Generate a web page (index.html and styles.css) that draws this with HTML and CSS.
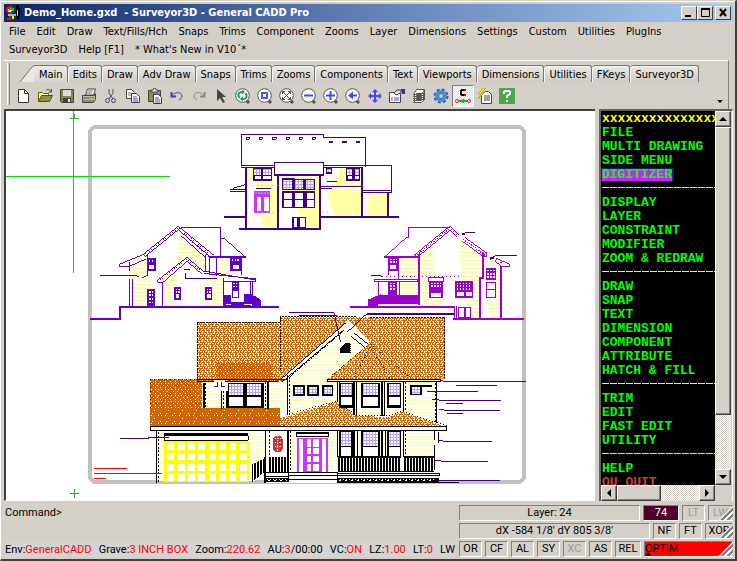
FILE: index.html
```
<!DOCTYPE html>
<html lang="en">
<head>
<meta charset="utf-8">
<title>Demo_Home.gxd - Surveyor3D - General CADD Pro</title>
<link rel="stylesheet" href="styles.css">
</head>
<body>
<div class="window">
  <header class="titlebar">
    <svg class="app-icon" viewBox="0 0 16 16" shape-rendering="crispEdges">
      <circle cx="4" cy="5" r="3" fill="#fff" stroke="#f00" stroke-width="2"/>
      <path d="M4 8v7M1 14h4" stroke="#f00" stroke-width="2"/>
      <path d="M2 10h12" stroke="#0ff" stroke-width="2"/>
      <path d="M6 11h2v3h-2z" fill="#ff0"/>
      <path d="M10 0h3v3h1v8l-2 4-2-4z" fill="#000"/><path d="M11 5v6" stroke="#ccc"/>
      <path d="M7 3v3M3 4h3" stroke="#0c0" stroke-width="2"/>
    </svg>
    <h1>Demo_Home.gxd&nbsp; - Surveyor3D - General CADD Pro</h1>
    <div class="window-buttons">
      <button aria-label="Minimize"><svg viewBox="0 0 12 10"><path d="M2 8h6" stroke="#000" stroke-width="2"/></svg></button>
      <button aria-label="Maximize"><svg viewBox="0 0 12 10"><path d="M2.500 0v8.500h8V0" fill="none" stroke="#000"/><path d="M2 1h9" stroke="#000" stroke-width="2"/></svg></button>
      <button class="close" aria-label="Close"><svg viewBox="0 0 12 10"><path d="M3 1l6 7M9 1l-6 7" stroke="#000" stroke-width="2"/></svg></button>
    </div>
  </header>

  <nav class="menubar">
    <a href="#">File</a><a href="#">Edit</a><a href="#">Draw</a><a href="#">Text/Fills/Hch</a><a href="#">Snaps</a><a href="#">Trims</a><a href="#">Component</a><a href="#">Zooms</a><a href="#">Layer</a><a href="#">Dimensions</a><a href="#">Settings</a><a href="#">Custom</a><a href="#">Utilities</a><a href="#">PlugIns</a><a href="#">Surveyor3D</a><a href="#">Help [F1]</a><a href="#">* What's New in V10´*</a>
  </nav>

  <section class="ribbon">
    <div class="grip"></div>
    <div class="ribbon-body">
      <div class="tabs" role="tablist">
        <svg class="tab-slant" viewBox="0 0 14 17"><path d="M0 17L12 2L14 1V17z" fill="#e9e7e2"/><path d="M0 17L12 2L14 .5" fill="none" stroke="#777"/></svg>
        <button role="tab" class="active" aria-selected="true">Main</button><button role="tab">Edits</button><button role="tab">Draw</button><button role="tab">Adv Draw</button><button role="tab">Snaps</button><button role="tab">Trims</button><button role="tab">Zooms</button><button role="tab">Components</button><button role="tab">Text</button><button role="tab">Viewports</button><button role="tab">Dimensions</button><button role="tab">Utilities</button><button role="tab">FKeys</button><button role="tab">Surveyor3D</button>
      </div>
      <div class="tools">
        <svg class="defs" width="0" height="0"><defs>
          <symbol id="lens" viewBox="0 0 16 16"><path d="M11 12l3 3" stroke="#555" stroke-width="3"/><circle cx="7.500" cy="7.500" r="6.800" fill="#fff" stroke="#555"/></symbol>
        </defs></svg>
        <button aria-label="New"><svg viewBox="0 0 16 16"><path d="M3.500 1.500h6l4 4v9h-10z" fill="#fff" stroke="#333"/><path d="M9.500 1.500v4h4" fill="none" stroke="#333"/></svg></button>
        <button aria-label="Open"><svg viewBox="0 0 16 16"><path d="M1.500 13.500v-9h4l1 1h5v2" fill="#ffffb0" stroke="#660"/><path d="M1.500 13.500l3-6h11l-3 6z" fill="#939347" stroke="#550"/><path d="M9 2.500c2-2 4-1 5 1M14.500 1v3h-3" fill="none" stroke="#444"/></svg></button>
        <button aria-label="Save"><svg viewBox="0 0 16 16"><path d="M1.500 1.500h13v13h-12l-1-1z" fill="#85854c" stroke="#444"/><path d="M4 2h8v6H4z" fill="#ddd"/><path d="M4 10h8v5H4z" fill="#444"/><path d="M9 11h2v3H9z" fill="#eee"/></svg></button>
        <button aria-label="Print"><svg viewBox="0 0 16 16"><path d="M4.500 7l2-6h8l-2 6z" fill="#fff" stroke="#444"/><path d="M7 3h5M6 5h5" stroke="#777"/><path d="M1.500 7.500h11l2-2v6l-2 3h-11z" fill="#bbb" stroke="#444"/><path d="M1 10h12M1 13h12M13 8l2-2" stroke="#555"/><path d="M9 11h3" stroke="#cc0" stroke-width="2"/></svg></button>
        <button aria-label="Cut"><svg viewBox="0 0 16 16" fill="none"><path d="M6 1v4l4 6M10 1v4l-4 6" stroke="#555"/><circle cx="4.500" cy="12.500" r="2" stroke="#3a3aa0"/><circle cx="10.500" cy="12.500" r="2" stroke="#3a3aa0"/></svg></button>
        <button aria-label="Copy"><svg viewBox="0 0 16 16"><path d="M1.500 1.500h5l3 3v6h-8z" fill="#fff" stroke="#444"/><path d="M3 5h4M3 7h4" stroke="#777"/><path d="M6.500 5.500h5l3 3v6h-8z" fill="#fff" stroke="#338"/><path d="M8 9h4M8 11h5M8 13h5" stroke="#557"/></svg></button>
        <button aria-label="Paste"><svg viewBox="0 0 16 16"><path d="M1.500 2.500h12v11h-12z" fill="#8c8c50" stroke="#444"/><path d="M4 4V2h2l1-2h1l1 2h2v2z" fill="#eed" stroke="#444"/><path d="M6.500 6.500h5l3 3v6h-8z" fill="#fff" stroke="#338"/><path d="M8 10h4M8 12h5M8 14h5" stroke="#557"/></svg></button>
        <button aria-label="Undo"><svg viewBox="0 0 16 16" fill="none" stroke="#4444a8"><path d="M3 8c3-5 10-4 10 0 0 2-1 3-3 4"/><path d="M2.500 4v4.500h4.500" stroke-width="2"/></svg></button>
        <button aria-label="Redo"><svg viewBox="0 0 16 16" fill="none" stroke="#888"><path d="M13 8C10 3 3 4 3 8c0 2 1 3 3 4"/><path d="M13.500 4v4.500h-4.500" stroke-width="2"/></svg></button>
        <button aria-label="Select"><svg viewBox="0 0 16 16"><path d="M4 1v12l3-3 3 5 2-1-3-5h4z" fill="#444"/></svg></button>
        <button aria-label="Regenerate"><svg viewBox="0 0 16 16"><use href="#lens"/><path d="M4.500 10C2 6 4 4 7 4M10.500 5c2.500 4 .5 6-2.500 6" fill="none" stroke="#295" stroke-width="2"/><path d="M7 1.500l3 2.500-3 2.500zM8 8.500l-3 2.500 3 2.500z" fill="#295"/></svg></button>
        <button aria-label="Zoom window"><svg viewBox="0 0 16 16"><use href="#lens"/><path d="M5 5h5v5H5z" fill="#fff" stroke="#55f" stroke-width="2"/></svg></button>
        <button aria-label="Zoom all"><svg viewBox="0 0 16 16"><use href="#lens"/><path d="M4 4l7 7M11 4l-7 7" stroke="#446"/><path d="M3.500 6V3.500H6M9 3.500h2.500V6M11.500 9v2.500H9M6 11.500H3.500V9" fill="none" stroke="#446"/></svg></button>
        <button aria-label="Zoom out"><svg viewBox="0 0 16 16"><use href="#lens"/><path d="M3 7.500h9" stroke="#44f" stroke-width="2"/></svg></button>
        <button aria-label="Zoom in"><svg viewBox="0 0 16 16"><use href="#lens"/><path d="M3 7.500h9M7.500 3v9" stroke="#44f" stroke-width="2"/></svg></button>
        <button aria-label="Zoom previous"><svg viewBox="0 0 16 16"><use href="#lens"/><path d="M3 7.500l5-4v3h4v2H8v3z" fill="#44f"/></svg></button>
        <button aria-label="Pan"><svg viewBox="0 0 16 16"><path d="M8 1l3 3H9v3h3V5l3 3-3 3V9H9v3h2l-3 3-3-3h2V9H4v2L1 8l3-3v2h3V4H5z" fill="#44f"/></svg></button>
        <button aria-label="Properties"><svg viewBox="0 0 16 16"><path d="M.5 4.500h11v10H.5z" fill="#fff" stroke="#444"/><path d="M5 5l3-3h4v3l-5 2z" fill="#ddd" stroke="#444"/><path d="M12 1h4v5h-3z" fill="#339"/><path d="M2 10h2M2 12h2" stroke="#d33"/><path d="M5 10h5M5 12h5" stroke="#44d"/></svg></button>
        <button aria-label="Layers"><svg viewBox="0 0 16 16" fill="#fff" stroke="#555"><path d="M2.500 14.500l3-3h8l-3 3zM2.500 12.500l3-3h8l-3 3zM2.500 10.500l3-3h8l-3 3zM2.500 8.500l3-3h8l-3 3zM2.500 6.500l3-5h8l-3 5z"/><path d="M13.500 2v10"/></svg></button>
        <button aria-label="Settings"><svg viewBox="0 0 16 16"><circle cx="8" cy="8" r="6" fill="none" stroke="#44f" stroke-width="3" stroke-dasharray="2.700 2"/><circle cx="8" cy="8" r="4.500" fill="#d4d0c8" stroke="#399cb4" stroke-width="3"/><circle cx="8" cy="8" r="2.500" fill="none" stroke="#44f"/></svg></button>
        <button class="pressed" aria-label="Object snap"><svg viewBox="0 0 16 16"><path d="M10 2H7L6 3v3l1 1h3" fill="none" stroke="#000" stroke-width="2"/><path d="M9 2h2M9 7h2" stroke="#d00" stroke-width="2"/><path d="M1 13h14" stroke="#000"/><g fill="#fff" stroke="#c22"><circle cx="2" cy="13" r="1.500"/><circle cx="14" cy="13" r="1.500"/></g><circle cx="8" cy="13" r="2" fill="#0c0"/></svg></button>
        <button aria-label="Quick list"><svg viewBox="0 0 16 16"><path d="M4.500 6.500l4-3h3l3 3v9h-10z" fill="#fff" stroke="#444"/><path d="M7 8h6M7 10h6M7 12h6" stroke="#444"/><path d="M6 0L1 6h3l-3 5 6-6H4l5-5z" fill="#ee0" stroke="#998800" stroke-width=".5"/></svg></button>
        <button aria-label="Help"><svg viewBox="0 0 16 16"><path d="M0 0h16v16H0z" fill="#4aa84a"/><path d="M5 6V4l1-1h4l1 1v2L8 8v2M8 12v2" fill="none" stroke="#fff" stroke-width="2"/></svg></button>
        <button class="more" aria-label="More tools"><svg viewBox="0 0 6 4"><path d="M0 0h6L3 3z"/></svg></button>
      </div>
    </div>
  </section>

  <main class="workspace">
    <div class="canvas">
      <svg class="drawing" width="588" height="390" viewBox="6 111 588 390" shape-rendering="crispEdges" fill="none">
        <defs>
          <pattern id="lap" width="12" height="12" patternUnits="userSpaceOnUse"><path d="M0 0h12v9H0z" fill="#ffffa6"/></pattern>
          <pattern id="siding" width="9" height="9" patternUnits="userSpaceOnUse"><path d="M0 0h9v9H0z" fill="#fff"/><path d="M0 0h9v4H0z" fill="#ffffa6"/></pattern>
          <pattern id="shingle" width="36" height="24" patternUnits="userSpaceOnUse"><path d="M0 0h36v24H0z" fill="#cc6600"/><path d="M0 4.500h6M9 4.500h3M15 4.500h6M24 4.500h9M3 10.500h6M12 10.500h6M21 10.500h3M27 10.500h6M0 16.500h3M6 16.500h6M15 16.500h9M27 16.500h6M3 22.500h6M12 22.500h6M21 22.500h6M30 22.500h6M9 7.500h3M24 7.500h3M3 13.500h3M15 13.500h3M30 13.500h3M18 1.500h3M33 1.500h3M6 19.500h3M21 19.500h3" stroke="#fff" stroke-width="3"/></pattern>
          <pattern id="dense" width="30" height="18" patternUnits="userSpaceOnUse"><path d="M0 0h30v18H0z" fill="#cc6600"/><path d="M3 4.500h3M15 4.500h3M24 4.500h3M9 10.500h3M21 10.500h3M0 16.500h3M15 16.500h3" stroke="#fff" stroke-width="3"/></pattern>
          <pattern id="sparse" width="42" height="24" patternUnits="userSpaceOnUse"><path d="M0 0h42v24H0z" fill="#cc6600"/><path d="M3 4.500h3M24 4.500h3M33 4.500h3M12 13.500h3M6 22.500h3M30 22.500h3" stroke="#fff" stroke-width="3"/></pattern>
          <pattern id="rails" width="9" height="60" patternUnits="userSpaceOnUse"><path d="M0 0h6v60H0z" fill="#000"/></pattern>
          <pattern id="pane" width="9" height="9" patternUnits="userSpaceOnUse"><path d="M0 0h9v9H0z" fill="#fff"/><path d="M4.500 0v9M0 4.500h9" stroke="#b8a0ff" stroke-width="4"/></pattern>
        </defs>

        <rect x="90" y="127" width="434" height="355" rx="6" stroke="#c0c0c0" stroke-width="4"/>
        <path d="M6 176.500h164M73.500 111v162" stroke="#00e000"/>
        <path d="M70 118.500h9M74.500 114v5M70 493.500h9M74.500 489v9" stroke="#30b030"/>

        <!-- Rear elevation -->
        <g transform="translate(210 120) scale(.333333)" stroke="#400080" stroke-width="3">
          <g fill="url(#lap)" stroke="none"><path d="M111 143h81v64h-52l-8-28h-21zM180 210h22v115h-39l-15-46h32zM207 170h120v153h-42l-23-60h65v-3H207zM347 206h106v85h-80zM392 143h16v40h48v16H358l18-20zM478 220h53v68h-60z"/></g>
          <path d="M94.500 137.500v-94h246v9h126v90M94 136.500h98M340 136.500h205v81h-87M94 142.500h98M340 142.500h118M458 211.500h87"/>
          <path d="M193.500 163v-36h147v36" fill="#fff"/><path d="M192 165h149" stroke-width="6"/>
          <path d="M108 143v180M204 166v160M330 166v160M456 142v150M534 218v73M87 326h246M42 291h66M333 291h234" stroke-width="6"/>
          <path d="M333 199.500h123M333 205.500h33M350 184.500h30M138 205.500h46M61 214.500h45M61 208.500h45M68 205.500l38-12"/>
          <path d="M109.500 52.500h9v6h-9zM148.500 52.500h9v6h-9zM187.500 52.500h12v6h-12zM229.500 52.500h9v6h-9zM268.500 52.500h9v6h-9zM307.500 52.500h9v6h-9z"/>
          <path d="M357 66h12M396 66h15M438 66h12" stroke-width="6"/>
          <g fill="#400080" stroke="none"><path d="M129 143h57v40h-57zM216 174h39v3h60v33H216zM216 213h100v51H216zM408 143h42v40h-42zM348 143h18v18h-18zM246 291h42v33h-42z"/></g>
          <g fill="url(#pane)" stroke="none"><path d="M133 146h21v19h-21zM160 146h23v19h-23zM220 180h27v27h-27zM255 180h25v27h-25zM289 180h24v27h-24zM411 147h16v18h-16zM434 147h14v18h-14zM351 147h12v8h-12z"/></g>
          <g fill="#fff" stroke="none"><path d="M134 168h19v9h-19zM160 168h22v9h-22zM222 220h24v17h-24zM222 241h24v20h-24zM255 220h24v17h-24zM255 241h24v20h-24zM290 220h22v17h-22zM290 241h22v20h-22zM413 167h13v11h-13zM435 167h13v11h-13zM252 295h10v26h-10zM270 295h16v26h-16z"/></g>
          <path d="M132 213h48v66h-48z" fill="#cc33ff" stroke="none"/><path d="M140 231h12v42h-12zM161 231h15v42h-15z" fill="#fff" stroke="none"/>
          <path d="M135 219h45" stroke="#aa88dd" stroke-width="6" stroke-dasharray="6 3"/>
          <path d="M110 196.500h100M336 196.500h50M110 277.500h90M336 277.500h30" stroke="#bba8ff" stroke-dasharray="3 12"/>
        </g>

        <!-- Left elevation -->
        <g transform="translate(80 215) scale(.333333)" stroke="#6000cc" stroke-width="3">
          <g fill="url(#lap)" stroke="none"><path d="M147 142l53-22v60l-24 5h-29zM298 48l77 75v45h-25l-30-38-28 28zM154 182h39l20-15v106h-59zM249 193l53-45-18 125h-35zM389 178h40v95h-54l-5-60zM416 126h36v50h-36z"/></g>
          <path d="M190 118L295 34l108 88M196 124l99-80 94 80M303 62l72 64"/>
          <path d="M193 121L295 39l102 84M310 58l76 66" stroke-dasharray="3 6"/>
          <path d="M303 37.500h118v88M421 70.500h12l61 54M118 148l80-33M118 154.500h29l50-22M118 147v8"/>
          <path d="M390 126h107" stroke-width="6"/>
          <path d="M233 196l88-69 48 41 158 27M233 202h16l72-63 45 38M233 195v7M147.500 142v25M147.500 193v80M156.500 193v80M201.500 117v65l-16 7M248.500 202v72M376.500 120v52M388.500 126v50M409.500 126v56M431.500 190v83M485.500 126v54M512.500 200v64M518.500 200v64M429 198.500h98v-7l-155-16"/>
          <path d="M240 196l81-64 48 42" stroke-dasharray="3 6"/>
          <path d="M118 276h480M30 312h91v-36" stroke-width="5"/>
          <g fill="#6000cc" stroke="none"><path d="M203 129h25v38h-25zM201 222h24v53h-24zM282 216h21v38h-21zM375 216h22v38h-22zM450 126h34v41h-34zM456 198h21v51h-21zM431 240h22v35h-22zM452 261h60v14h-60zM492 237h24v33h-24zM516 243h10l17 12v20h-27z"/></g>
          <g fill="#fff" stroke="none"><path d="M208 150h14v12h-14zM288 237h10v13h-10zM381 237h11v13h-11zM460 150h16v12h-16zM459 228h15v18h-15zM439 266h14v4h-14zM492 266h24v4h-24z"/></g>
          <path d="M207 138h15M208 231h12M208 240h12M208 252h12M208 262h12M287 223h12M287 231h12M380 223h12M380 231h12M456 135h20M460 206h15M460 214h15" stroke="#fff" stroke-width="4" stroke-dasharray="4 4"/>
          <path d="M60 181.500h110l6 4M318 174v18h93M312 162.500h18" stroke="#400080"/>
        </g>

        <!-- Right elevation -->
        <g transform="translate(340 215) scale(.333333)" stroke="#9900cc" stroke-width="3">
          <g fill="url(#lap)" stroke="none"><path d="M236 118l44-24 7 95h20v80l-50 2-20-22zM178 132h54v56h-54zM180 200h56v42h-56zM357 72l71 49v60h-12v130h-22l-30-115zM440 135l44 18v155h-34l-12-98z"/></g>
          <path d="M222 121L330 33l27 26M231 127l99-81 22 21M374 67l66 47v12h-8l-66-48"/>
          <path d="M226 124L330 39l24 24M370 73l66 48" stroke-width="4" stroke-dasharray="3 4"/>
          <path d="M330 37.500H205v31h-7l-61 55M145.500 126v54M175.500 126v70M235.500 118v153M239.500 118v152M103 192.500h130v6H103zM115.500 200v66M120.500 200v66M178.500 200v40M342.500 272v40M349.500 272v40"/>
          <path d="M133 126h100M31 275h315M340 312h212" stroke-width="6"/>
          <path d="M430 112v78h-10v120M484 142v168" stroke-width="5"/>
          <path d="M470 130l39 18v6h-24l-19-14z" fill="url(#lap)"/>
          <g fill="#9900cc" stroke="none"><path d="M145 126h30v42h-30zM145 199h27v40h-27zM118 240h115v28H113v8H84v-22l28-12zM267 199h42v50h-42zM345 198h54v50h-54zM354 276h40v34h-40zM438 160h30v34h-30zM438 200h30v48h-30z"/></g>
          <g fill="#fff" stroke="none"><path d="M151 150h18v12h-18zM121 200h22v36h-22zM274 233h30v12h-30zM351 230h20v14h-20zM377 230h19v14h-19zM358 279h14v28h-14zM377 279h14v28h-14zM442 205h23v17h-23zM442 226h23v19h-23z"/></g>
          <path d="M150 134h20M150 142h20M150 206h18M150 214h18M150 223h18M274 206h30M274 214h30M350 206h45M350 214h45M350 223h45M442 167h24M442 177h24M442 187h24" stroke="#fff" stroke-width="5" stroke-dasharray="5 4"/>
          <path d="M265 189h46v10h-46z" fill="#fff"/><path d="M125 184.500h240" stroke-dasharray="3 9"/>
          <path d="M93 181.500h25l12 4M405 51.500h-27l-12 9M530 121.500h-64l-15 12M80 297.500h265" stroke="#400080"/><path d="M366 57h10M451 129h10" stroke="#400080" stroke-width="8"/>
        </g>

        <!-- Front elevation -->
        <g transform="translate(80 310) scale(.333333)" stroke="#000" stroke-width="3">
          <path d="M352 37h249V20h494v187H750V98L610 215H352z" fill="url(#shingle)" stroke="none"/>
          <path d="M412 160h165v50H412z" fill="url(#dense)" stroke="none"/>
          <path d="M352 208v-171h249v-17h227M1094 22v183M601 22v160M870 22h224" stroke-dasharray="6 3"/>
          <path d="M600 210L806 30l60 60 8 118v118H624V205z" fill="#fff" stroke="none"/>
          <path d="M624 205l172-150 71 57-10 98h-88v68L628 316zM367 218h255v78H367zM234 365h322v118l-42 30H234zM768 215h300v122l-300-12zM630 363h436v123H630z" fill="url(#siding)" stroke="none"/>
          <path d="M600 210L798 38M606 216L790 61M822 69l42 33M812 78l46 37"/><path d="M630 200l164-140" stroke-dasharray="6 3"/>
          <path d="M210 208h157v86H210z" fill="url(#dense)" stroke="none"/>
          <path d="M210 294h390v57H210z" fill="url(#sparse)" stroke="none"/>
          <path d="M210.500 294v-85h157" stroke-dasharray="3 9"/>
          <path d="M600 351v-26l170-50 60 43 98 3 36-16 136 46z" fill="url(#shingle)" stroke="none"/>
          <path d="M742 208L870 98l126 110z" fill="url(#shingle)" stroke="none"/><path d="M742 208L870 100l126 108M870 110l-50 95M870 110l60 95M770 274l60 43h98l36-14 136 44M768 274l-140 38" stroke-dasharray="3 6"/>
          <path d="M742 208h340v8H742zM211 351h890v10H211zM352 208.500h269M352 216h242" fill="#fff"/>
          <path d="M372 218v77M424 243v55M564 216v82M622 194v122M772 216v60M822 216v100M830 216v100M906 216v102M913 216v102M970 216v90M1070 216v124M230 361v157M556 361v90M624 361v130M772 361v80M822 361v80M832 361v80M906 361v80M916 361v80M970 361v120M1064 361v28M1076 365v35M1064 405v75" stroke-width="4"/>
          <path d="M236 366v149M378 220v75M430 243v55M558 216v80M630 200v116M568 364v70M632 364v120M778 216v70M976 216v88M1066 220v116M976 361v120" stroke-dasharray="6 5"/>
          <!-- Windows -->
          <g fill="#000" stroke="none"><path d="M438 218h114v75H438zM640 226h35v32h-35zM682 226h35v32h-35zM726 226h34v32h-34zM776 218h43v75h-43zM843 218h56v75h-56zM920 218h43v75h-43zM990 226h65v30h-65zM776 361h42v80h-42zM843 361h56v80h-56zM920 361h42v80h-42z"/></g>
          <g fill="url(#pane)" stroke="none"><path d="M446 222h42v33h-42zM500 222h44v33h-44zM645 232h25v20h-25zM688 232h24v20h-24zM732 232h23v20h-23zM782 222h33v32h-33zM849 222h46v32h-46zM926 222h33v32h-33zM995 230h26v22h-26zM782 366h32v42h-32zM849 366h46v42h-46zM926 366h33v42h-33z"/></g>
          <g fill="#fff" stroke="none"><path d="M447 262h41v26h-41zM501 262h42v26h-42zM782 260h33v26h-33zM849 261h45v26h-45zM926 260h33v26h-33zM1027 230h28v26h-28zM782 412h32v26h-32zM849 412h46v26h-46zM926 412h33v26h-33z"/></g>
          <path d="M781 126v-10l14-16h17v28h-31z" fill="#000" stroke="none"/><path d="M812 100v27" stroke="#fff" stroke-dasharray="3 3"/>
          <path d="M402 210h34v10h8v22h-20l-22-8z" fill="#fff" stroke="none"/>
          <!-- Garage -->
          <path d="M252 392h255v124H252z" fill="#ffff00" stroke="none"/>
          <g stroke="#fff" stroke-width="21" stroke-dasharray="21 10"><path d="M262 409.500h240M262 440.500h240M262 471.500h240M262 502.500h240"/></g>
          <path d="M252 374h252" stroke-width="9"/><path d="M253 378v13h252v-13" fill="#fff"/>
          <!-- Entry -->
          <path d="M651 384h92v104h-92z" fill="#cc33ff" stroke="none"/>
          <g fill="#fff" stroke="none"><path d="M658 388h10v97h-10zM727 388h12v97h-12zM680 388h14v22h-14zM700 388h16v22h-16zM680 414h14v19h-14zM700 414h16v19h-16zM680 437h14v20h-14zM700 437h16v20h-16zM680 462h14v20h-14zM700 462h16v20h-16z"/></g>
          <path d="M651 371h94v10h-94z" fill="#fff"/><path d="M648 369h98" stroke-width="6"/>
          <path d="M585 378h17l7 10v28l-7 10h-17l-7-10v-28z" fill="#b83c3c" stroke="none"/><path d="M585 387h18M584 398h20M584 411h20M594 376v50" stroke="#ffd8b0" stroke-dasharray="4 3"/>
          <!-- Porch -->
          <path d="M516 464l40-22h68v44h149v-45h290v77H556v-26l-40 26z" fill="#fff" stroke="none"/>
          <path d="M516 464l40-20v40l-40 33zM568 442h56v44h-56zM773 441h188v45H773zM973 441h90v45h-90z" fill="url(#rails)" stroke="none"/>
          <path d="M556 442v76M626 440v76M773 441h190M973 441h90M773 486v30" stroke-width="5"/>
          <path d="M554 487h70M554 499.500h70M773 484h290M773 489.500h306M773 498h306v-8M628 488h144M626 496h146M628 508h144"/>
          <path d="M556 510h68M773 510h305" stroke-width="12"/><path d="M560 508.500h62M779 508.500h290" stroke="#fff" stroke-dasharray="3 6"/><path d="M563 511.500h59M776 511.500h290" stroke="#fff" stroke-dasharray="6 12"/><path d="M772 517h364"/>
          <!-- Callouts -->
          <g stroke="#400080"><path d="M120 385.500h87v-3h60M627 7.500h135l20 90M657 16.500h113M802 66l60-56h263M1082 210l16 6h240M1128 226.500h123M1042 244.500h152M1056 268.500l42 3h165M1098 280.500h50M1076 298l24 3h160M1100 310.500h50M1074 390l20 4h142M1062 451l30 3h132M1062 509l30 3h168M402 229.500h12v-14M424 215v14h12"/></g>
          <path d="M42 475.500h99M42 490.500h204M42 505.500h36" stroke="#f00"/>
        </g>
      </svg>
    </div>

    <aside class="side">
      <div class="side-top">
        <div class="commands">
          <p class="rule-text">xxxxxxxxxxxxxxx</p>
          <a href="#">FILE</a><a href="#">MULTI DRAWING</a><a href="#">SIDE MENU</a><a href="#" class="current"><span>DIGITIZER</span></a>
          <hr>
          <a href="#">DISPLAY</a><a href="#">LAYER</a><a href="#">CONSTRAINT</a><a href="#">MODIFIER</a><a href="#">ZOOM &amp; REDRAW</a>
          <hr>
          <a href="#">DRAW</a><a href="#">SNAP</a><a href="#">TEXT</a><a href="#">DIMENSION</a><a href="#">COMPONENT</a><a href="#">ATTRIBUTE</a><a href="#">HATCH &amp; FILL</a>
          <hr>
          <a href="#">TRIM</a><a href="#">EDIT</a><a href="#">FAST EDIT</a><a href="#">UTILITY</a>
          <hr>
          <a href="#">HELP</a><a href="#" class="quit">QU QUIT</a>
        </div>
        <div class="vscroll">
          <button aria-label="Scroll up"><svg viewBox="0 0 8 8"><path d="M0 6l4-4 4 4z"/></svg></button>
          <div class="thumb"></div><div class="track"></div>
          <button aria-label="Scroll down"><svg viewBox="0 0 8 8"><path d="M0 2h8L4 6z"/></svg></button>
        </div>
      </div>
      <div class="hscroll">
        <button aria-label="Scroll left"><svg viewBox="0 0 8 8"><path d="M6 0v8L2 4z"/></svg></button>
        <div class="thumb"></div><div class="track"></div>
        <button aria-label="Scroll right"><svg viewBox="0 0 8 8"><path d="M2 0v8l4-4z"/></svg></button>
      </div>
    </aside>
  </main>

  <footer class="status">
    <div class="status-left">
      <label class="prompt">Command&gt;<input type="text"></label>
      <div class="readout"><span>Env:<b>GeneralCADD</b></span><span>Grave:<b>3 INCH BOX</b></span><span>Zoom:<b>220.62</b></span><span>AU:<b>3</b>/00:00</span><span>VC:<b>ON</b></span><span>LZ:<b>1.00</b></span><span>LT:<b>0</b></span><span>LW</span></div>
    </div>
    <div class="panes">
      <div class="pane-row"><div class="pane wide">Layer: 24</div><div class="pane color">74</div><div class="pane off">LT</div><div class="pane off last">LW</div></div>
      <div class="pane-row"><div class="pane wide">dX -584 1/8' dY 805 3/8'</div><div class="pane">NF</div><div class="pane">FT</div><div class="pane xor">XOR</div></div>
      <div class="pane-row"><div class="pane">OR</div><div class="pane">CF</div><div class="pane">AL</div><div class="pane">SY</div><div class="pane off">XC</div><div class="pane">AS</div><div class="pane rel">REL</div><div class="pane optim">OPTIM<svg viewBox="0 0 6 4"><path d="M0 4l3-4 3 4z"/></svg></div></div>
    </div>
  </footer>
</div>
</body>
</html>
```
FILE: styles.css
```
* { box-sizing: border-box; }
body {
  margin: 0;
  background: #d4d0c8;
  color: #000;
  font: 11px/18px "DejaVu Sans Condensed", "Noto Sans", sans-serif;
}
button {
  margin: 0; padding: 0; border: 0; background: none;
  font: inherit; color: inherit;
}
a { color: inherit; text-decoration: none; }
h1, p { margin: 0; }
svg { display: block; }

.window {
  display: flex; flex-direction: column;
  height: 100vh;
  padding: 3px 2px 0 3px;
  border: 1px solid #fff;
  border-top-color: #d4d0c8;
  border-right: 2px solid #404040;
  border-bottom: 2px solid #404040;
  box-shadow: inset 0 1px #fff;
}

.titlebar {
  display: flex; align-items: center; gap: 2px;
  height: 18px; flex: none;
  padding: 0 2px;
  background: linear-gradient(90deg, #0a246a, #5a7ab0 45%, #a6caf0);
  color: #fff;
}
.titlebar h1 { flex: 1; font-size: 11px; line-height: 18px; white-space: nowrap; }
.app-icon { width: 16px; height: 16px; }
.window-buttons { display: flex; }
.window-buttons button {
  width: 16px; height: 14px; padding: 1px;
  background: #d4d0c8;
  border: 1px solid;
  border-color: #fff #404040 #404040 #fff;
}
.window-buttons svg { width: 12px; height: 10px; }
.window-buttons .close { margin-left: 2px; }

.menubar {
  display: flex; flex-wrap: wrap; column-gap: 11px;
  flex: none;
  height: 38px;
  padding: 1px 56px 1px 5px;
}

.ribbon {
  display: flex; gap: 2px;
  flex: none;
  height: 49px;
  margin-right: 4px;
  padding: 2px 0 0 3px;
  border-top: 1px solid #fff;
  border-right: 1px solid #808080;
}
.grip { width: 3px; height: 42px; border-right: 1px solid #808080; border-left: 1px solid #fff; }
.ribbon-body { flex: 1; min-width: 0; }
.tabs { display: flex; height: 19px; padding: 2px 0 0 8px; }
.tab-slant { width: 14px; height: 17px; }
.tabs button {
  height: 17px; padding: 0 4px 0 5px;
  line-height: 17px; white-space: nowrap;
  background: linear-gradient(#eceae6, #cfcbc3);
  border-top: 1px solid #777; border-right: 1px solid #777;
  border-radius: 4px 3px 0 0;
  box-shadow: inset 1px 1px #f8f8f6;
}
.tabs .active { background: linear-gradient(#eceae6, #d8d5ce); box-shadow: none; border-radius: 0 3px 0 0; }
.tools { display: flex; align-items: center; height: 24px; margin: 2px 5px 0 0; }
.tools button { display: grid; place-items: center; width: 22px; height: 22px; }
.tools svg { width: 16px; height: 16px; }
.tools .defs { width: 0; height: 0; }
.tools .pressed { background: repeating-conic-gradient(#fff 0 25%, #ddd9d2 0 50%) 0 0 / 2px 2px; border: 1px solid; border-color: #808080 #fff #fff #808080; }
.tools .more { width: 6px; margin-left: auto; align-self: flex-end; height: 12px; }
.tools .more svg { width: 6px; height: 4px; }

.workspace { display: flex; gap: 4px; flex: 1; min-height: 0; }
.canvas {
  flex: 1; min-width: 0; overflow: hidden;
  background: #fff;
  border: 2px solid #404040;
  border-right: 0;
  border-bottom: 1px solid #fff;
}
.side {
  display: flex; flex-direction: column;
  width: 134px;
  padding-right: 1px;
  border-top: 2px solid #606060;
  border-left: 2px solid #606060;
  border-right: 1px solid #fff;
}
.side-top { display: flex; flex: 1; min-height: 0; }
.commands {
  flex: 1; min-width: 0; overflow: hidden;
  padding: 1px 0 0 1px;
  background: #000; color: #00ff00;
  font: bold 13px/14px "Liberation Mono", monospace;
  white-space: nowrap;
}
.commands a { display: block; }
.commands .rule-text { color: #ff0; }
.commands .current { width: max-content; margin-left: -1px; padding: 0 2px 0 1px; background: #0a246a; }
.commands .current span { display: block; height: 14px; background: #cc22ff; border-bottom: 1px solid #0a246a; border-top: 1px solid #0a246a; line-height: 12px; }
.commands hr {
  height: 14px; margin: 0; border: 0;
  background: repeating-linear-gradient(90deg, #ff0 0 7px, #000 7px 8px) 0 5px / 100% 1px no-repeat;
}
.commands .quit { color: #c04040; }

.vscroll, .hscroll { display: flex; flex: none; }
.vscroll { flex-direction: column; width: 16px; }
.hscroll { height: 16px; margin-right: 16px; }
.vscroll button, .hscroll button, .thumb {
  display: grid; place-items: center; flex: none;
  width: 16px; height: 16px;
  background: #d4d0c8;
  border: 1px solid;
  border-color: #fff #404040 #404040 #fff;
  box-shadow: inset -1px -1px #808080;
}
.vscroll svg, .hscroll svg { width: 8px; height: 8px; }
.track { flex: 1; background: repeating-conic-gradient(#fff 0 25%, #d4d0c8 0 50%) 0 0 / 2px 2px; }
.vscroll .thumb { height: auto; flex: 84 0 0; }
.vscroll .track { flex: 16 0 0; }
.hscroll .thumb { width: 44px; }

.status {
  display: flex; gap: 4px;
  flex: none;
  padding: 4px 0 2px;
  font: 11px/15px Roboto, sans-serif;
}
.status-left { display: flex; flex-direction: column; justify-content: space-between; flex: 1; min-width: 0; }
.prompt { display: flex; padding-left: 1px; }
.prompt input { flex: 1; min-width: 0; padding: 0; border: 0; background: none; font: inherit; height: 15px; outline: 0; }
.readout { display: flex; justify-content: space-between; padding-left: 1px; background: #d4d4d4; white-space: nowrap; }
.readout b { color: #f00; font-weight: normal; }
.panes { display: flex; flex-direction: column; gap: 2px; position: relative; width: 274px; }
.pane-row { display: flex; gap: 3px; }
.pane {
  width: 23px; height: 16px;
  border: 1px solid; border-color: #808080 #fff #fff #808080;
  text-align: center; line-height: 14px; white-space: nowrap; overflow: hidden;
}
.wide { flex: 1; }
.pane.color { width: 36px; background: #500028; color: #fff; }
.off { color: #a09c94; }
.pane.last { width: 25px; }
.pane.xor { width: 28px; }
.pane.rel { width: 26px; }
.pane.optim { position: relative; flex: 1; background: #f00; text-align: left; }
.optim svg { position: absolute; left: 0; bottom: 0; width: 6px; height: 4px; }
.pane-row::after {
  content: ""; position: absolute; right: 0;
  width: 14px; height: 15px;
  background: repeating-linear-gradient(135deg, #808080 0 2px, #fff 2px 3px, #d4d0c8 3px 4px);
  clip-path: polygon(100% 0, 100% 100%, 0 100%);
}
```
